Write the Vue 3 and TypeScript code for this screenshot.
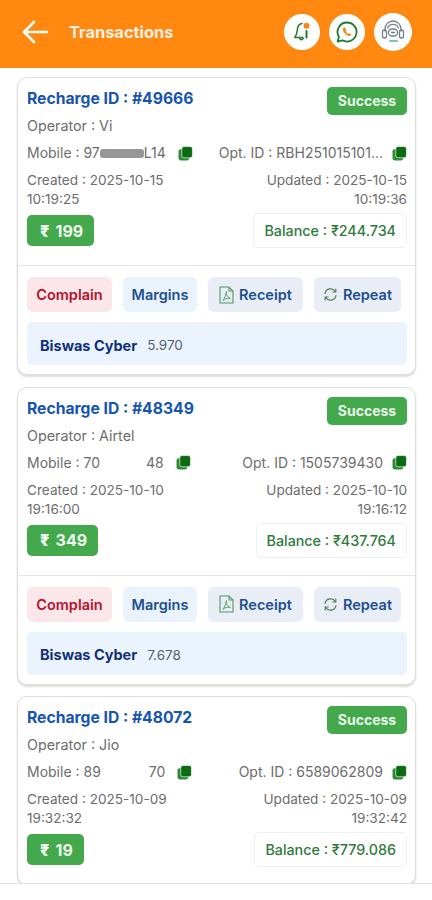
<script setup lang="ts">
interface Tx {
  id: string; op: string; pre: string; post: string; maskW: number; mask: string; optId: string;
  created: string; cTime: string; updated: string; uTime: string; amount: string; balance: string; margin?: string; full: boolean;
}
const txs: Tx[] = [
  { id: '49666', op: 'Vi', pre: '97', post: 'L14', maskW: 44, mask: 'grey', optId: 'RBH251015101...', created: '2025-10-15', cTime: '10:19:25', updated: '2025-10-15', uTime: '10:19:36', amount: '199', balance: '244.734', margin: '5.970', full: true },
  { id: '48349', op: 'Airtel', pre: '70', post: '48', maskW: 46, mask: 'white', optId: '1505739430', created: '2025-10-10', cTime: '19:16:00', updated: '2025-10-10', uTime: '19:16:12', amount: '349', balance: '437.764', margin: '7.678', full: true },
  { id: '48072', op: 'Jio', pre: '89', post: '70', maskW: 48, mask: 'white', optId: '6589062809', created: '2025-10-09', cTime: '19:32:32', updated: '2025-10-09', uTime: '19:32:42', amount: '19', balance: '779.086', full: false },
]
</script>

<template>
  <div class="page">
    <header class="top">
      <svg class="back" width="28" height="28" viewBox="0 0 28 28" fill="none" stroke="#fff" stroke-width="2.6" stroke-linecap="round" stroke-linejoin="round"><path d="M26 14H3M13 4 3 14l10 10"/></svg>
      <span class="ttl">Transactions</span>
      <div class="tools">
        <span class="circle">
          <svg width="24" height="24" viewBox="0 0 24 24" fill="none" stroke="#1c7a2e" stroke-width="1.5" stroke-linecap="round" stroke-linejoin="round"><path d="M12 3.500C8.800 4 7.600 6.500 7.400 9.500 7.200 13 6.600 15 4.800 17.500h8M9.800 18.500c.5 1.600 2.600 1.600 3.400 0"/><path d="M16.500 11v6.500" stroke-width="2"/><circle cx="16.500" cy="5.800" r="3" fill="#f5871f" stroke="none"/></svg>
        </span>
        <span class="circle">
          <svg width="26" height="26" viewBox="0 0 26 26" fill="none"><path d="M13 3.500a9.500 9.500 0 0 0-8.100 14.400L3.600 22.600l4.800-1.300A9.500 9.500 0 1 0 13 3.500Z" stroke="#1c7a2e" stroke-width="1.800" stroke-linejoin="round"/><path d="M9.800 8.600c-1 .8-1.200 2-.6 3.400 1 2.300 2.800 4 5 4.800 1.400.5 2.500.1 3.200-1l-2.200-1.700-1.100.8c-1-.5-2-1.500-2.500-2.600l.8-1-1.200-2.500c-.6-.3-1-.4-1.400-.2Z" fill="#f5871f"/></svg>
        </span>
        <span class="circle c3">
          <svg width="30" height="30" viewBox="0 0 30 30" fill="none" stroke="#737e86" stroke-width="1.300" stroke-linecap="round"><path d="M7 14v-2a8 8 0 0 1 16 0v2"/><path d="M9.500 11a6 6 0 0 1 11 0"/><rect x="4.500" y="13" width="4" height="8" rx="2"/><rect x="21.500" y="13" width="4" height="8" rx="2"/><rect x="10.500" y="12" width="9" height="7" rx="3.500"/><path d="M13.500 15.500h3"/><path d="M12 24h7" stroke="#7fc4a8" stroke-width="2"/></svg>
        </span>
      </div>
    </header>

    <main class="list">
      <article v-for="t in txs" :key="t.id" class="card">
        <div class="upper">
          <div class="row head">
            <span class="rid">Recharge ID : #{{ t.id }}</span>
            <span class="ok">Success</span>
          </div>
          <div class="op">Operator : {{ t.op }}</div>
          <div class="row ids">
            <span class="cell mob">
              <span>Mobile : {{ t.pre }}<i class="mask" :class="t.mask" :style="{ width: t.maskW + 'px' }"></i>{{ t.post }}</span>
              <svg class="copy" width="15" height="15" viewBox="0 0 14 14"><rect x="0.500" y="3" width="10" height="10.500" rx="2" fill="#2f8a35"/><rect x="3.500" y="0.500" width="10" height="10.500" rx="2" fill="#0b6b12" stroke="#fff" stroke-width=".6"/></svg>
            </span>
            <span class="cell">
              <span>Opt. ID : {{ t.optId }}</span>
              <svg class="copy" width="15" height="15" viewBox="0 0 14 14"><rect x="0.500" y="3" width="10" height="10.500" rx="2" fill="#2f8a35"/><rect x="3.500" y="0.500" width="10" height="10.500" rx="2" fill="#0b6b12" stroke="#fff" stroke-width=".6"/></svg>
            </span>
          </div>
          <div class="row dates">
            <span>Created : {{ t.created }}<br>{{ t.cTime }}</span>
            <span class="right">Updated : {{ t.updated }}<br>{{ t.uTime }}</span>
          </div>
          <div class="row money">
            <span class="amt"><b>₹</b>{{ t.amount }}</span>
            <span class="bal">Balance : ₹{{ t.balance }}</span>
          </div>
        </div>
        <div v-if="t.full" class="lower">
          <div class="actions">
            <span class="btn red">Complain</span>
            <span class="btn blue">Margins</span>
            <span class="btn slate">
              <svg width="15" height="18" viewBox="0 0 15 18" fill="none" stroke="#4f9a62" stroke-width="1.100"><path d="M1 1h9l4 4v12H1Z"/><path d="M10 1v4h4"/><path d="M7.500 5.500c-.8 3 .2 5 3.800 7-3-.6-5.500-.2-7.300 2 1.500-2.500 3-5.500 3.500-9Z" stroke="#4f9a62" stroke-width=".9"/></svg>
              Receipt
            </span>
            <span class="btn slate">
              <svg width="15" height="15" viewBox="0 0 15 15" fill="none" stroke="#4f7f5c" stroke-width="1.200" stroke-linecap="round"><path d="M2 6.500A5.600 5.600 0 0 1 12.300 4.500"/><path d="M13 8.500A5.600 5.600 0 0 1 2.700 10.500"/><path d="M12.800 2v3h-3M2.200 13v-3h3"/></svg>
              Repeat
            </span>
          </div>
          <div class="bar"><b>Biswas Cyber</b><span>{{ t.margin }}</span></div>
        </div>
      </article>
    </main>
  </div>
</template>

<style scoped>
.page { width: 432px; height: 900px; background: #fff; overflow: hidden; font-family: Inter, "Liberation Sans", sans-serif; }
.top { height: 68px; background: #ff8811; display: flex; align-items: center; padding: 0 20px 5px 21px; box-sizing: border-box; }
.back { flex: none; }
.ttl { margin-left: 20px; color: #fdf0e0; font-size: 16.400px; font-weight: 700; }
.tools { margin-left: auto; display: flex; gap: 9px; align-items: center; }
.circle { width: 36px; height: 36px; border-radius: 50%; background: #fff; display: flex; align-items: center; justify-content: center; }
.c3 { width: 38px; height: 38px; }
.list { height: 816px; box-sizing: border-box; padding: 9px 16px 0 17px; display: flex; flex-direction: column; gap: 11.500px; overflow: hidden; border-bottom: 1px solid #e4e4e4; }
.card { flex: none; border: 1.500px solid #dedede; border-radius: 10px; box-shadow: 0 2px 2px rgba(0,0,0,.14); background: #fff; }
.upper { padding: 8px 8px 0 9px; height: 187px; box-sizing: border-box; }
.row { display: flex; justify-content: space-between; align-items: center; }
.head { height: 29px; align-items: flex-start; }
.rid { color: #1554b0; font-size: 15.700px; font-weight: 700; line-height: 26px; }
.ok { background: #43a94c; color: #eaf6ea; font-size: 14px; font-weight: 700; width: 80px; height: 28px; line-height: 28px; text-align: center; border-radius: 5px; margin-top: 1px; }
.op { color: #6d6d6d; font-size: 14.300px; line-height: 18px; margin-top: 2px; }
.ids { margin-top: 9px; color: #6d6d6d; font-size: 14px; line-height: 18px; }
.cell { display: flex; align-items: center; gap: 9px; }
.mob { gap: 12px; }
.copy { flex: none; }
.mask { display: inline-block; height: 9px; vertical-align: 0; }
.mask.grey { background: #7d7d80; border-radius: 3px; opacity: .8; }
.mask.white { background: #fff; }
.dates { margin-top: 9px; color: #6d6d6d; font-size: 13.600px; line-height: 19px; align-items: flex-start; }
.right { text-align: right; }
.money { margin-top: 4px; align-items: center; }
.amt { background: #43a94c; color: #eef8ee; font-size: 16px; font-weight: 700; height: 31px; padding: 0 11px 0 13px; display: flex; align-items: center; gap: 6px; border-radius: 5px; }
.amt b { font-size: 16px; }
.bal { color: #2f7a3c; font-size: 14.300px; font-weight: 500; border: 1px solid #efefef; border-radius: 5px; height: 35px; padding: 0 10px; box-sizing: border-box; line-height: 33px; }
.lower { border-top: 1.500px solid #e6e6e6; padding: 11px 8px 9px 9px; }
.actions { display: flex; gap: 11px; }
.btn { height: 35px; display: flex; align-items: center; justify-content: center; gap: 5px; border-radius: 6px; font-size: 14.500px; font-weight: 600; box-sizing: border-box; }
.red { width: 85px; background: #fbe6e9; color: #b3132b; }
.blue { width: 74px; background: #eaf2fb; color: #1d4f91; }
.slate { width: 95px; background: #e9edf6; color: #1d4f91; }
.slate:last-child { width: 87px; }
.bar { margin-top: 10px; height: 43px; box-sizing: border-box; padding-top: 3px; background: #ebf4fe; border-radius: 5px; display: flex; align-items: center; gap: 10px; padding-left: 13px; font-size: 14.500px; }
.bar b { color: #10307c; font-weight: 700; }
.bar span { color: #55606e; font-size: 13.500px; }
</style>
